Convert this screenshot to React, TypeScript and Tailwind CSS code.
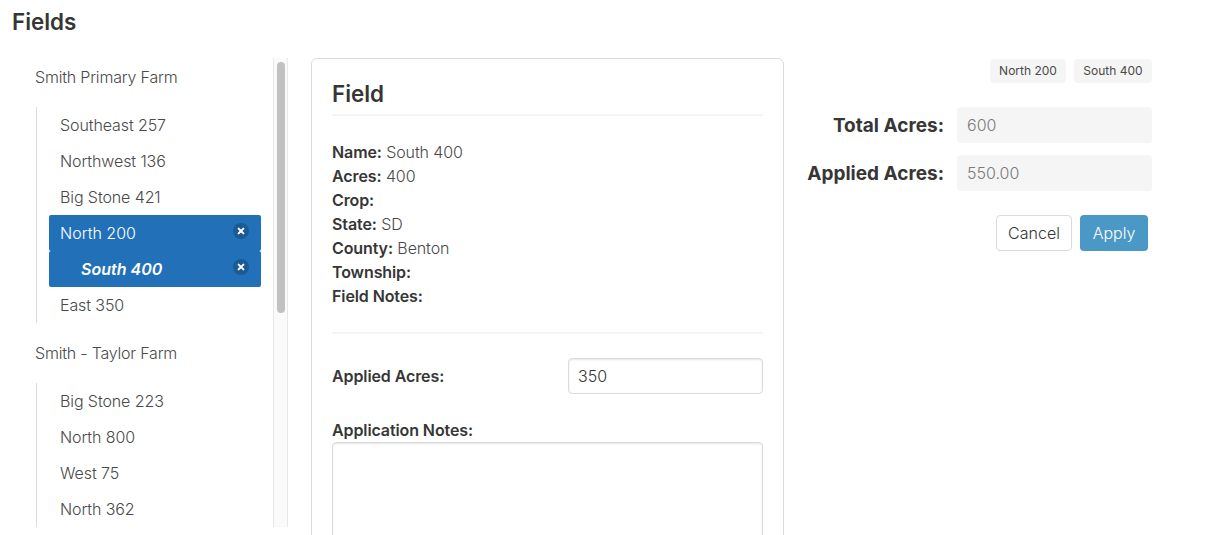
const farms = [
	{
		name: "Smith Primary Farm",
		fields: ["Southeast 257", "Northwest 136", "Big Stone 421", "North 200", "South 400", "East 350"],
	},
	{
		name: "Smith - Taylor Farm",
		fields: ["Big Stone 223", "North 800", "West 75", "North 362"],
	},
];

const details = [
	["Name:", "South 400"],
	["Acres:", "400"],
	["Crop:", ""],
	["State:", "SD"],
	["County:", "Benton"],
	["Township:", ""],
	["Field Notes:", ""],
];

const RemoveIcon = () => (
	<svg viewBox="0 0 16 16" className="w-4 h-4 shrink-0 -mt-1">
		<circle cx="8" cy="8" r="8" fill="#1b5a94" />
		<path d="M5.6 5.6l4.8 4.8M10.4 5.6l-4.8 4.8" stroke="#fff" strokeWidth="2" strokeLinecap="round" />
	</svg>
);

const FieldRow = ({ label }: { label: string }) => {
	if (label === "North 200") {
		return (
			<div className="flex items-center justify-between h-9 pl-[11px] pr-3 bg-[#2170b8] text-white rounded-[2px]">
				<span>{label}</span>
				<RemoveIcon />
			</div>
		);
	}
	if (label === "South 400") {
		return (
			<div className="flex items-center justify-between h-9 pl-8 pr-3 bg-[#2170b8] text-white font-semibold italic rounded-[2px]">
				<span>{label}</span>
				<RemoveIcon />
			</div>
		);
	}
	return <div className="flex items-center h-9 pl-[11px] tracking-[-0.1px]">{label}</div>;
};

const Sidebar = () => (
	<div className="flex h-[469px] w-[288px] shrink-0">
		<div className="flex-1 overflow-hidden pl-[35px]">
			{farms.map((farm, i) => (
				<div key={farm.name}>
					<div
						className={
							i === 0
								? "h-[38px] mb-[11px] flex items-center tracking-[-0.2px]"
								: "h-[60px] flex items-center tracking-[-0.2px]"
						}
					>
						{farm.name}
					</div>
					<div className="ml-px w-[225px] border-l border-[#dbdbdb] pl-3">
						{farm.fields.map((field) => (
							<FieldRow key={field} label={field} />
						))}
					</div>
				</div>
			))}
		</div>
		<div className="w-[15px] shrink-0 border-x border-[#e8e8e8] bg-[#fafafa] pt-1 pl-[3px]">
			<div className="w-2 h-[251px] rounded-full bg-[#c1c1c1]" />
		</div>
	</div>
);

const FieldCard = () => (
	<div className="ml-[23px] w-[473px] h-[520px] shrink-0 border border-[#dbdbdb] rounded-md px-5 pt-[17px]">
		<h2 className="text-[22.4px] leading-9 font-semibold text-[#363636] h-10 border-b-2 border-[#f5f5f5]">Field</h2>
		<div className="mt-6 tracking-[-0.1px]">
			{details.map(([label, value]) => (
				<div key={label} className="h-6 leading-6">
					<strong className="font-semibold text-[#363636]">{label}</strong> {value}
				</div>
			))}
		</div>
		<div className="mt-6 h-0.5 bg-[#f5f5f5]" />
		<div className="mt-6 flex items-center justify-between">
			<label className="font-semibold tracking-[-0.1px] text-[#363636]">Applied Acres:</label>
			<input
				readOnly
				value="350"
				className="w-[195px] h-9 px-[9px] border border-[#dbdbdb] rounded bg-white text-[#363636] shadow-[inset_0_1px_2px_rgba(10,10,10,0.1)]"
			/>
		</div>
		<label className="block mt-6 leading-6 font-semibold tracking-[-0.1px] text-[#363636]">Application Notes:</label>
		<textarea
			readOnly
			className="block w-full h-[200px] border border-[#dbdbdb] rounded bg-white shadow-[inset_0_1px_2px_rgba(10,10,10,0.1)]"
		/>
	</div>
);

const Totals = () => (
	<div className="ml-4 w-[352px] shrink-0">
		<div className="flex justify-end gap-2 pt-px font-normal">
			<span className="flex items-center justify-center w-[76px] h-6 rounded bg-[#f5f5f5] text-xs">North 200</span>
			<span className="flex items-center justify-center w-[78px] h-6 rounded bg-[#f5f5f5] text-xs">South 400</span>
		</div>
		<div className="mt-6 flex items-center justify-end gap-[13px]">
			<label className="text-[19px] font-bold text-[#363636] pt-0.5">Total Acres:</label>
			<div className="flex items-center w-[195px] h-9 px-[10px] rounded bg-[#f5f5f5] text-[#7a7a7a]">600</div>
		</div>
		<div className="mt-3 flex items-center justify-end gap-[13px]">
			<label className="text-[19px] font-bold text-[#363636] pt-0.5">Applied Acres:</label>
			<div className="flex items-center w-[195px] h-9 px-[10px] rounded bg-[#f5f5f5] text-[#7a7a7a]">550.00</div>
		</div>
		<div className="mt-6 pr-1 flex justify-end gap-2">
			<button className="h-9 w-[76px] border border-[#dbdbdb] rounded bg-white text-[#363636]">Cancel</button>
			<button className="h-9 w-[68px] rounded bg-[#4a98c5] text-white">Apply</button>
		</div>
	</div>
);

const App = () => {
	return (
		<div className="h-[535px] overflow-hidden bg-white text-base font-light antialiased text-[#4a4a4a] font-['Inter',sans-serif]">
			<h1 className="h-[58px] pl-3 pt-[7px] text-[22.4px] leading-[30px] font-semibold text-[#363636]">Fields</h1>
			<div className="flex items-start">
				<Sidebar />
				<FieldCard />
				<Totals />
			</div>
		</div>
	);
};

export default App;
